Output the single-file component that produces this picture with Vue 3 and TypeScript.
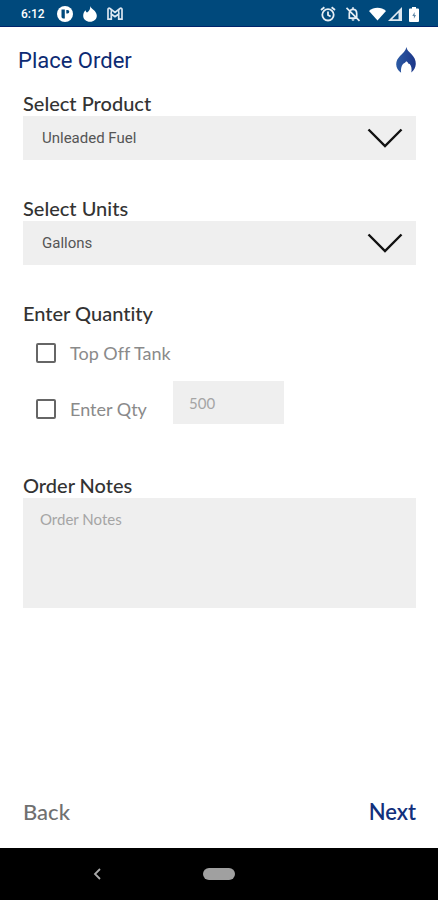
<script setup lang="ts">
import { ref } from 'vue'

const products: string[] = ['Unleaded Fuel']
const unitOptions: string[] = ['Gallons']

const product = ref(products[0])
const units = ref(unitOptions[0])
const topOff = ref(false)
const useQuantity = ref(false)
const quantity = ref('')
const notes = ref('')
</script>

<template>
  <div class="screen">
    <div class="status">
      <div class="status-group">
        <span class="clock">6:12</span>
        <svg class="icon" viewBox="0 0 16 16" aria-hidden="true">
          <circle cx="8" cy="8" r="8" fill="#fff" />
          <path d="M4.500 3.500h3.300v9h-1.600a1.700 1.700 0 0 1-1.700-1.700z" fill="#00497c" />
          <path d="M9.300 4h1.200a1.700 1.700 0 0 1 0 3.600H9.300z" fill="#00497c" />
        </svg>
        <svg class="icon" viewBox="0 0 16 16" aria-hidden="true">
          <path d="M8.300 0C8.600 2.700 14.800 4.600 14.800 9.700c0 3.600-3 6-6.800 6s-6.800-2.400-6.800-6c0-2.500 1-4.300 2.400-5.500.2 1.200.7 1.900 1.500 2.300C7.400 5.300 8.400 2.800 8.300 0z" fill="#fff" />
        </svg>
        <svg class="icon" viewBox="0 0 16 16" aria-hidden="true">
          <path d="M1 13.200V3.300C1 2.200 2.200 1.900 3 2.500L8 6.400l5-3.900c.8-.6 2-.3 2 .8v9.900h-3.300V8L8 10.800 4.300 8v5.200z" fill="none" stroke="#dbe6f0" stroke-width="1.700" />
          <path d="M4.300 3.500V8M11.700 3.500V8" stroke="#dbe6f0" stroke-width="1.400" />
        </svg>
      </div>
      <div class="status-group status-right">
        <svg class="icon alarm" viewBox="0 0 16 16" aria-hidden="true">
          <g fill="none" stroke="#e6eef5" stroke-width="1.800">
            <circle cx="8" cy="8.800" r="5.700" />
            <path d="M8 5.500V9l2.600 1.600M1 4l3.400-2.800M15 4l-3.400-2.800" />
          </g>
        </svg>
        <svg class="icon bell" viewBox="0 0 16 16" aria-hidden="true">
          <g fill="none" stroke="#e6eef5" stroke-width="1.700">
            <path d="M3.500 12.200h9M4.300 12V7.500C4.300 5 5.800 3.300 8 3.300s3.700 1.700 3.700 4.200V12M8 1.200v2M1.500 1.800l13 13" />
          </g>
          <path d="M6.500 13.300h3a1.500 1.500 0 0 1-3 0z" fill="#e6eef5" />
        </svg>
        <svg class="wifi" viewBox="0 0 18 14" aria-hidden="true">
          <path d="M0 3.800C5-.9 13-.9 18 3.800L9 14z" fill="#fff" />
        </svg>
        <svg class="signal" viewBox="0 0 14 14" aria-hidden="true">
          <path d="M14 0v14H0z" fill="#dfe8f0" />
          <path d="M10.500 5.800v6.400H4.200z" fill="#00497c" />
        </svg>
        <svg class="battery" viewBox="0 0 10 15" aria-hidden="true">
          <path d="M3 0h4v1.500h2a1 1 0 0 1 1 1V14a1 1 0 0 1-1 1H1a1 1 0 0 1-1-1V2.500a1 1 0 0 1 1-1h2z" fill="#fff" />
          <path d="M5.600 5 3.300 9h1.600v2.800L7 8H5.600z" fill="#5f86a6" />
        </svg>
      </div>
    </div>

    <header class="header">
      <h1 class="title">Place Order</h1>
      <svg class="flame" viewBox="0 0 20 26" aria-hidden="true">
        <defs>
          <linearGradient id="flame-fill" x1="0" y1="0" x2="1" y2="0">
            <stop offset="0" stop-color="#2c5ba4" />
            <stop offset="1" stop-color="#1c3688" />
          </linearGradient>
        </defs>
        <path d="M10.500 0c.2 3.300 2.400 4.300 4.800 6.900C18 9.800 20 12.800 19.800 17c-.2 3.600-1.800 6.500-4.500 8.500.7-3.600.2-6.300-1.600-8.500-.6-.2-.9-.4-1.500-.6-.3-1-1-1.600-2-2.100-.6 1.300-1.700 1.700-3.200 2.800C5.200 19.400 4.700 22.500 5.100 25.700 2 23.700.2 20.800.2 17.300c0-3.400 1.400-5.700 3.800-8.300C6.800 6 9.600 4 10.500 0z" fill="url(#flame-fill)" />
      </svg>
    </header>

    <form class="form" @submit.prevent>
      <div class="field">
        <label class="label" for="product">Select Product</label>
        <div class="select-wrap">
          <select id="product" v-model="product" class="select">
            <option v-for="item in products" :key="item">{{ item }}</option>
          </select>
          <svg class="chevron" viewBox="0 0 36 20" aria-hidden="true">
            <path d="M1.500 1.500L18 18 34.500 1.500" />
          </svg>
        </div>
      </div>

      <div class="field">
        <label class="label" for="units">Select Units</label>
        <div class="select-wrap">
          <select id="units" v-model="units" class="select">
            <option v-for="item in unitOptions" :key="item">{{ item }}</option>
          </select>
          <svg class="chevron" viewBox="0 0 36 20" aria-hidden="true">
            <path d="M1.500 1.500L18 18 34.500 1.500" />
          </svg>
        </div>
      </div>

      <fieldset class="field quantity">
        <legend class="label">Enter Quantity</legend>
        <div class="options">
          <div class="option-row">
            <label class="option"><input v-model="topOff" type="checkbox" class="check" />Top Off Tank</label>
          </div>
          <div class="option-row option-row-entry">
            <label class="option"><input v-model="useQuantity" type="checkbox" class="check" />Enter Qty</label>
            <input v-model="quantity" class="qty" type="text" inputmode="numeric" placeholder="500" aria-label="Quantity" />
          </div>
        </div>
      </fieldset>

      <div class="field">
        <label class="label" for="notes">Order Notes</label>
        <textarea id="notes" v-model="notes" class="notes" placeholder="Order Notes"></textarea>
      </div>

      <div class="actions">
        <button type="button" class="action">Back</button>
        <button type="submit" class="action action-next">Next</button>
      </div>
    </form>

    <nav class="system-nav">
      <button type="button" class="nav-button nav-back" aria-label="Back">
        <svg viewBox="0 0 8 12" aria-hidden="true"><path d="M7 1L2 6l5 5" /></svg>
      </button>
      <button type="button" class="nav-button nav-home" aria-label="Home"><span class="pill"></span></button>
    </nav>
  </div>
</template>

<style>
body {
  margin: 0;
  background: #fff;
}
</style>

<style scoped>
* {
  box-sizing: border-box;
}
.screen {
  display: flex;
  flex-direction: column;
  min-height: 100vh;
  background: #fff;
  font-family: Lato, "Open Sans", sans-serif;
  font-variant-ligatures: none;
}
.status {
  display: flex;
  align-items: center;
  justify-content: space-between;
  height: 27px;
  padding: 2px 19px 0 21px;
  background: #00497c;
  border-bottom: 1px solid #00246c;
}
.status-group {
  display: flex;
  align-items: center;
  gap: 9px;
}
.clock {
  margin-right: 3px;
  color: #fff;
  font: 500 12px Roboto, sans-serif;
}
.icon {
  width: 16px;
  height: 16px;
}
.status-right {
  gap: 2px;
}
.alarm {
  margin-right: 7px;
}
.bell {
  margin-right: 6px;
}
.wifi {
  width: 17px;
  height: 14px;
}
.signal {
  width: 14px;
  height: 14px;
}
.battery {
  width: 10px;
  height: 15px;
  margin-left: 5px;
}
.header {
  display: flex;
  align-items: center;
  justify-content: space-between;
  height: 65px;
  padding: 0 22px 0 18px;
}
.title {
  margin: 0;
  padding-top: 2px;
  color: #0d2b73;
  font: 400 22px/28px Roboto, sans-serif;
}
.flame {
  width: 20px;
  height: 26px;
}
.form {
  display: flex;
  flex: 1;
  flex-direction: column;
  padding: 0 22px 0 23px;
}
.field {
  margin-bottom: 37px;
}
.label {
  display: block;
  padding: 0 0 2px;
  color: #333;
  font-size: 20px;
  font-weight: 500;
  line-height: 22px;
}
.select-wrap {
  display: grid;
  align-items: center;
  background: #efefef;
}
.select,
.chevron {
  grid-area: 1 / 1;
}
.select {
  width: 100%;
  height: 44px;
  padding: 0 60px 0 19px;
  border: 0;
  border-radius: 0;
  appearance: none;
  background: transparent;
  color: #555;
  font: 400 15px Roboto, sans-serif;
}
.chevron {
  justify-self: end;
  width: 36px;
  height: 20px;
  margin-right: 13px;
  fill: none;
  stroke: #111;
  stroke-width: 2.400;
  pointer-events: none;
}
.quantity {
  min-width: 0;
  margin: 0 0 50px;
  padding: 0;
  border: 0;
}
.options {
  display: flex;
  flex-direction: column;
  gap: 7px;
  padding: 5px 0 0 13px;
}
.option-row {
  display: flex;
  align-items: center;
  height: 43px;
}
.option-row-entry {
  align-items: flex-end;
}
.option {
  display: flex;
  align-items: center;
  gap: 14px;
  width: 137px;
  height: 30px;
  color: #8a8a8a;
  font-size: 18px;
  white-space: nowrap;
}
.check {
  flex: none;
  width: 20px;
  height: 20px;
  margin: 0;
  border: 2px solid #666;
  border-radius: 2px;
  appearance: none;
  background: #fff;
}
.check:checked {
  background: #0d2b73;
}
.qty {
  width: 111px;
  height: 43px;
  padding: 0 16px;
  border: 0;
  background: #efefef;
  color: #555;
  font: 400 15px Lato, sans-serif;
}
.notes {
  display: block;
  width: 100%;
  height: 110px;
  padding: 11px 17px;
  border: 0;
  resize: none;
  background: #efefef;
  color: #555;
  font: 400 15px/20px Lato, sans-serif;
}
.qty::placeholder,
.notes::placeholder {
  color: #a5a5a5;
}
.actions {
  display: flex;
  align-items: center;
  justify-content: space-between;
  height: 72px;
  margin-top: auto;
}
.action {
  padding: 0;
  border: 0;
  background: none;
  color: #707070;
  font: 500 22px/28px Lato, sans-serif;
}
.action-next {
  color: #12307c;
  font-weight: 600;
}
.system-nav {
  display: grid;
  grid-template-columns: 1fr 50px 1fr;
  align-items: center;
  height: 52px;
  background: #000;
}
.nav-button {
  display: flex;
  align-items: center;
  justify-content: center;
  height: 40px;
  padding: 0;
  border: 0;
  background: none;
}
.nav-back {
  width: 40px;
  justify-self: center;
}
.nav-back svg {
  width: 8px;
  height: 12px;
  fill: none;
  stroke: #aaa;
  stroke-width: 1.800;
}
.pill {
  width: 32px;
  height: 12px;
  border-radius: 6px;
  background: #a0a0a0;
}
</style>
